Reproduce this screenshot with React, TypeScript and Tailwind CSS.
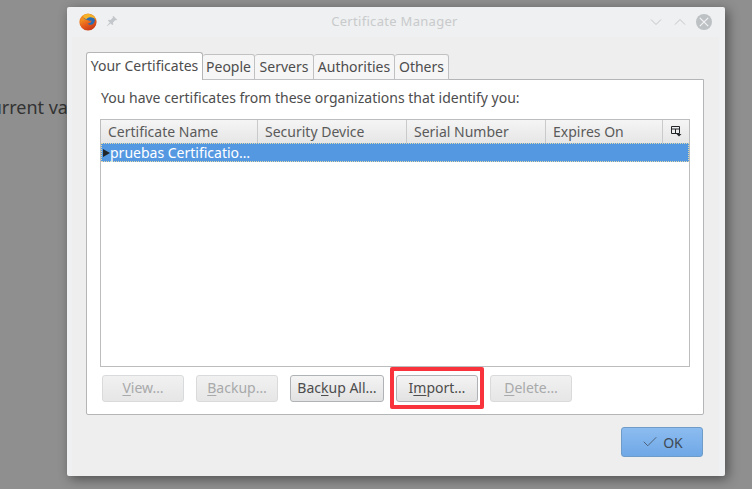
import React from 'react';
import { Check } from 'lucide-react';

const COLUMNS = [
  { label: 'Certificate Name', width: 'w-[157px]' },
  { label: 'Security Device', width: 'w-[149px]' },
  { label: 'Serial Number', width: 'w-[139px]' },
  { label: 'Expires On', width: 'w-[117px]' },
];

const TABS = [
  { label: 'People', width: 'w-[52px]' },
  { label: 'Servers', width: 'w-[59px]' },
  { label: 'Authorities', width: 'w-[81px]' },
  { label: 'Others', width: 'w-[54px]' },
];

const FirefoxIcon = () => (
  <svg width="18" height="18" viewBox="0 0 18 18">
    <defs>
      <linearGradient id="ffBody" x1="0" y1="0" x2="0.6" y2="1">
        <stop offset="0" stopColor="#f6a623" />
        <stop offset="0.55" stopColor="#e8601c" />
        <stop offset="1" stopColor="#c93a17" />
      </linearGradient>
    </defs>
    <circle cx="9" cy="9" r="8.6" fill="url(#ffBody)" />
    <circle cx="10.2" cy="7.2" r="5.6" fill="#2a6db5" />
    <path d="M4 2.5C6 1 9 .6 11.5 1.2 14.5 2 16.6 4.4 17.2 7.4 16.2 5.4 14.4 4.4 12.6 4.4 10.6 4.2 8.6 4.6 7.6 6 6 6.2 4.6 5 4 2.5Z" fill="#f5b32a" />
    <path d="M7.2 6.6C8.6 7.8 10.8 8 12.6 7.4 12.4 9.4 10.4 10.8 8.4 10.4 9.4 11.8 11.6 12.2 13.4 11.4 15 10.6 16.2 9.2 17 7.4 17.6 11 15.6 15 11.8 16.6 8 18 3.4 16.4 1.6 12.6 1 11 .9 9.4 1.3 7.8 2 6.6 3 5.4 4 4.6 4.6 5.6 5.8 6.4 7.2 6.6Z" fill="url(#ffBody)" />
  </svg>
);

const PinIcon = () => (
  <svg width="12" height="12" viewBox="0 0 12 12" fill="#c3c7cb">
    <path d="M7.2 .8 11.2 4.8 10.2 5.4 9.4 5 7 7.4 7.2 9.4 6.2 10 2 5.8 2.6 4.8 4.6 5 7 2.6 6.6 1.8Z" />
    <path d="M3.6 7.4 4.6 8.4 1 11.2.8 11Z" />
  </svg>
);

const ColumnPickerIcon = () => (
  <svg width="11" height="11" viewBox="0 0 11 11" fill="none">
    <path d="M.5 .5H8.5V7.5H.5ZM.5 3H8.5M4.5 3V7.5" stroke="#232629" />
    <path d="M5.5 8H10.5L8 10.5Z" fill="#232629" />
  </svg>
);

interface DialogButtonProps {
  before: string;
  mnemonic: string;
  after: string;
  width: string;
  disabled?: boolean;
}

const DialogButton: React.FC<DialogButtonProps> = ({ before, mnemonic, after, width, disabled = false }) => (
  <div
    className={`${width} h-[27px] flex items-center justify-center rounded-[3px] border pb-[2px] text-[14px] bg-gradient-to-b ${
      disabled
        ? 'border-[#d9dadb] from-[#f1f1f1] to-[#e6e6e6] text-[#a8a9aa]'
        : 'border-[#b0b3b5] from-[#f4f4f4] to-[#e2e2e2] text-[#4d4d4d]'
    }`}
  >
    <span>
      {before}
      <span className="underline underline-offset-2">{mnemonic}</span>
      {after}
    </span>
  </div>
);

export default function App() {
  return (
    <div className="relative w-[752px] h-[489px] overflow-hidden bg-[#8f8f8f] font-['Noto_Sans',sans-serif]">
      <span className="absolute left-[-18px] top-[94px] whitespace-nowrap text-[18px] text-[#333333]">
        current value
      </span>

      <div className="absolute left-[67px] top-[7px] w-[658px] h-[469px] rounded-[2px] bg-[#eff0f1] shadow-[3px_3px_12px_rgba(0,0,0,0.45)] flex flex-col">
        {/* title bar */}
        <div className="h-[30px] flex items-center pl-[12px] pr-[13px] shrink-0">
          <FirefoxIcon />
          <span className="ml-[9px] mt-[-2px]"><PinIcon /></span>
          <span className="flex-1 text-center text-[13px] text-[#c8cacc] tracking-[0.3px] pl-[21px]">Certificate Manager</span>
          <svg width="12" height="8" viewBox="0 0 12 8" fill="none" className="mr-[12px]">
            <path d="M1 1.5 6 6.5 11 1.5" stroke="#c3c5c8" strokeWidth="1" />
          </svg>
          <svg width="12" height="8" viewBox="0 0 12 8" fill="none" className="mr-[10px]">
            <path d="M1 6.5 6 1.5 11 6.5" stroke="#c3c5c8" strokeWidth="1" />
          </svg>
          <svg width="16" height="16" viewBox="0 0 16 16" fill="none">
            <circle cx="8" cy="8" r="8" fill="#bdc1c4" />
            <path d="M3.8 3.8 12.2 12.2M12.2 3.8 3.8 12.2" stroke="#f2f3f4" strokeWidth="1.2" />
          </svg>
        </div>

        <div className="flex-1 ml-[5px] mr-[6px] pt-[1px] bg-[#eeeeee] flex flex-col">
          {/* tabs */}
          <div className="flex items-end h-[28px] ml-[14px] mt-[14px] shrink-0 relative z-10 text-[14px]">
            <div className="w-[117px] h-[28px] bg-white border border-b-0 border-[#b4b5b6] rounded-t-[3px] text-[#4d4d4d] flex items-center justify-center pb-[2px]">
              Your Certificates
            </div>
            {TABS.map((tab) => (
              <div
                key={tab.label}
                className={`${tab.width} h-[26px] bg-[#f6f6f6] border border-l-0 border-[#c0c1c2] rounded-t-[3px] text-[#4d4d4d] flex items-center justify-center pb-[2px]`}
              >
                {tab.label}
              </div>
            ))}
          </div>

          {/* panel */}
          <div className="ml-[14px] mt-[-1px] w-[618px] h-[336px] bg-white border border-[#b4b5b6] rounded-b-[2px] flex flex-col px-[13px] shrink-0">
            <p className="text-[14px] text-[#4d4d4d] mt-[6px] ml-[1px] h-[23px] leading-[23px]">
              You have certificates from these organizations that identify you:
            </p>
            <div className="mt-[10px] w-[590px] h-[248px] border border-[#bcbdbe] flex flex-col">
              <div className="flex h-[23px] shrink-0">
                {COLUMNS.map((col) => (
                  <div
                    key={col.label}
                    className={`${col.width} h-full bg-gradient-to-b from-[#f5f5f5] to-[#e6e6e6] border-r border-[#c9cacb] text-[14px] text-[#5a5a5a] pl-[7px] flex items-center`}
                  >
                    {col.label}
                  </div>
                ))}
                <div className="flex-1 bg-gradient-to-b from-[#f5f5f5] to-[#e6e6e6] flex items-center justify-center">
                  <ColumnPickerIcon />
                </div>
              </div>
              <div className="h-[19px] bg-[#5598e2] border border-dotted border-[#e3d9a8] flex items-center text-[14px] text-white shrink-0">
                <span className="ml-[1px] w-0 h-0 border-y-[4px] border-y-transparent border-l-[7px] border-l-[#232629]" />
                <span>pruebas Certificatio…</span>
              </div>
            </div>
            <div className="mt-[8px] ml-[2px] flex gap-[12px]">
              <DialogButton before="" mnemonic="V" after="iew…" width="w-[82px]" disabled />
              <DialogButton before="" mnemonic="B" after="ackup…" width="w-[82px]" disabled />
              <DialogButton before="Bac" mnemonic="k" after="up All…" width="w-[94px]" />
              <div className="relative">
                <DialogButton before="I" mnemonic="m" after="port…" width="w-[82px]" />
                <div className="absolute left-[-6px] top-[-8px] w-[94px] h-[42px] border-[4px] border-[#f8333c] rounded-[2px]" />
              </div>
              <DialogButton before="" mnemonic="D" after="elete…" width="w-[82px]" disabled />
            </div>
          </div>

          {/* footer */}
          <div className="flex justify-end mt-[12px] mr-[16px]">
            <div className="w-[82px] h-[30px] rounded-[3px] border border-[#6d9cc9] bg-gradient-to-b from-[#8cbcf0] to-[#6fa8e6] text-[14px] text-[#3f4a55] flex items-center justify-center gap-[4px]">
              <Check size={18} strokeWidth={1} />
              OK
            </div>
          </div>
        </div>
      </div>
    </div>
  );
}
